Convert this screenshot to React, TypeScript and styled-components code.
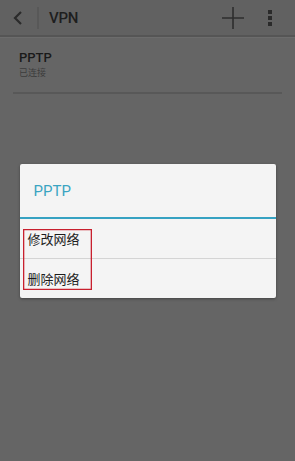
import React from "react";
import styled, { createGlobalStyle } from "styled-components";

const Global = createGlobalStyle`
  html, body { margin: 0; padding: 0; background: #646464; }
  body { font-family: Roboto, "Noto Sans CJK SC", sans-serif; width: 295px; height: 461px; overflow: hidden; }
`;

const Page = styled.div`
  position: relative;
  width: 295px;
  height: 461px;
  background: #656565;
`;

const Toolbar = styled.div`
  height: 35px;
  display: flex;
  align-items: center;
  background: #616161;
  border-bottom: 2px solid #555;
  box-shadow: 0 1px 0 #6c6c6c;
`;

const IconBtn = styled.div<{ $w: number }>`
  width: ${(p) => p.$w}px;
  height: 35px;
  display: flex;
  align-items: center;
  justify-content: center;
  flex-shrink: 0;
`;

const VDivider = styled.div`
  width: 2px;
  height: 22px;
  background: #585858;
  margin: 0 10px 0 2px;
`;

const Title = styled.div`
  flex: 1;
  font-size: 15px;
  font-weight: 500;
  color: #1e1e1e;
  letter-spacing: -0.2px;
`;

const List = styled.div`
  padding: 0 13px;
`;

const Item = styled.div`
  padding: 13px 6px 13px 6px;
  border-bottom: 2px solid #585858;
  display: flex;
  flex-direction: column;
  gap: 1px;
`;

const ItemTitle = styled.div`
  font-size: 13px;
  font-weight: 500;
  color: #1a1a1a;
  line-height: 16px;
`;

const ItemSub = styled.div`
  font-size: 9px;
  color: #3c3c3c;
  line-height: 12px;
`;

const Overlay = styled.div`
  position: absolute;
  inset: 0;
  display: flex;
  align-items: center;
  justify-content: center;
`;

const Dialog = styled.div`
  position: relative;
  width: 256px;
  background: #f4f4f4;
  border-radius: 2px;
  box-shadow: 0 1px 3px rgba(0, 0, 0, 0.35);
  margin-top: 1px;
`;

const DialogTitle = styled.div`
  height: 53px;
  display: flex;
  align-items: center;
  padding-left: 14px;
  font-size: 15px;
  color: #3aa4c2;
  border-bottom: 2px solid #36a2c2;
`;

const Option = styled.div<{ $last?: boolean }>`
  height: 39px;
  display: flex;
  align-items: center;
  padding-left: 8px;
  font-size: 13px;
  color: #1c1c1c;
  font-family: "Noto Sans CJK SC", sans-serif;
  border-bottom: ${(p) => (p.$last ? "none" : "1px solid #d4d4d4")};
`;

const Highlight = styled.div`
  position: absolute;
  left: 3px;
  top: 65px;
  width: 69px;
  height: 61px;
  box-shadow: inset 0 0 0 1.3px #c8202e;
  pointer-events: none;
`;

export default function App() {
  return (
    <>
      <Global />
      <Page>
        <Toolbar>
          <IconBtn $w={35}>
            <svg width="12" height="16" viewBox="0 0 12 16">
              <path d="M9 2 L3 8 L9 14" fill="none" stroke="#2b2b2b" strokeWidth="2.2" />
            </svg>
          </IconBtn>
          <VDivider />
          <Title>VPN</Title>
          <IconBtn $w={24}>
            <svg width="22" height="22" viewBox="0 0 22 22">
              <path d="M11 0 V22 M0 11 H22" stroke="#2e2e2e" strokeWidth="1.6" />
            </svg>
          </IconBtn>
          <IconBtn $w={50}>
            <svg width="6" height="18" viewBox="0 0 6 18">
              <rect x="1" y="1" width="4" height="4" fill="#2a2a2a" />
              <rect x="1" y="7" width="4" height="4" fill="#2a2a2a" />
              <rect x="1" y="13" width="4" height="4" fill="#2a2a2a" />
            </svg>
          </IconBtn>
        </Toolbar>
        <List>
          <Item>
            <ItemTitle>PPTP</ItemTitle>
            <ItemSub>已连接</ItemSub>
          </Item>
        </List>
        <Overlay>
          <Dialog>
            <DialogTitle>PPTP</DialogTitle>
            <Option>修改网络</Option>
            <Option $last>删除网络</Option>
            <Highlight />
          </Dialog>
        </Overlay>
      </Page>
    </>
  );
}
